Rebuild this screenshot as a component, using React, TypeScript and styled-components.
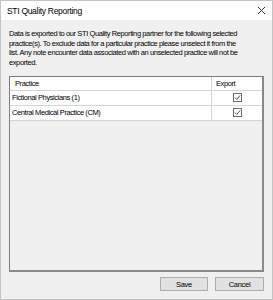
import styled, { createGlobalStyle } from 'styled-components';

const GlobalStyle = createGlobalStyle`
  html, body {
    margin: 0;
    padding: 0;
    background: #ffffff;
  }
  body {
    font-family: 'Liberation Sans', Arial, sans-serif;
    color: #000;
  }
`;

const StyledWindow = styled.div`
  width: 273px;
  height: 300px;
  box-sizing: border-box;
  border: 1px solid #c4c4c4;
  display: flex;
  flex-direction: column;
  background: #f0f0f0;
  overflow: hidden;
`;

const StyledTitleBar = styled.div`
  height: 19px;
  flex: none;
  background: #ffffff;
  display: flex;
  align-items: center;
  justify-content: space-between;
  padding: 0 6px 0 6px;
`;

const StyledTitle = styled.span`
  font-size: 8.5px;
  letter-spacing: -0.3px;
`;

const StyledBody = styled.div`
  flex: 1;
  display: flex;
  flex-direction: column;
  padding: 9px 8px 8px 8px;
  min-height: 0;
`;

const StyledDescription = styled.p`
  margin: 0 0 8px 0;
  width: 236px;
  font-size: 7.5px;
  line-height: 9.7px;
  letter-spacing: -0.4px;
`;

const StyledGrid = styled.div`
  flex: 1;
  border: 1px solid #7d7d7d;
  border-right-width: 2px;
  border-bottom-width: 2px;
  border-right-color: #8a8a8a;
  border-bottom-color: #8a8a8a;
  background: #f0f0f0;
  display: flex;
  flex-direction: column;
`;

const StyledRow = styled.div<{ $header?: boolean }>`
  display: grid;
  grid-template-columns: 202px 1fr;
  height: ${(p) => (p.$header ? '13px' : '14px')};
  background: #ffffff;
  border-bottom: 1px solid #d5d5d5;
  font-size: 7.5px;
  letter-spacing: -0.4px;
`;

const StyledCell = styled.div<{ $indent?: number; $center?: boolean }>`
  display: flex;
  align-items: center;
  justify-content: ${(p) => (p.$center ? 'center' : 'flex-start')};
  padding-left: ${(p) => p.$indent ?? 2}px;
  border-right: 1px solid #d5d5d5;
  white-space: nowrap;
  &:last-child {
    border-right: none;
  }
`;

const StyledButtons = styled.div`
  display: flex;
  justify-content: flex-end;
  gap: 7px;
  margin-top: 5px;
`;

const StyledButton = styled.button<{ $width: number }>`
  width: ${(p) => p.$width}px;
  height: 14px;
  padding: 0;
  background: #e1e1e1;
  border: 1px solid #adadad;
  font-family: 'Liberation Sans', Arial, sans-serif;
  font-size: 7.5px;
  letter-spacing: -0.3px;
  color: #000;
`;

const CloseIcon = () => (
  <svg width="9" height="9" viewBox="0 0 9 9">
    <path d="M1 1 L8 8 M8 1 L1 8" stroke="#222" strokeWidth="0.9" fill="none" />
  </svg>
);

const CheckBox = () => (
  <svg width="9" height="9" viewBox="0 0 9 9">
    <rect x="0.5" y="0.5" width="8" height="8" fill="#fff" stroke="#6d6d6d" />
    <path d="M2 4.6 L3.8 6.4 L7.1 2.4" stroke="#333" strokeWidth="0.9" fill="none" />
  </svg>
);

const practices = ['Fictional Physicians (1)', 'Central Medical Practice (CM)'];

const App = () => {
  return (
    <StyledWindow>
      <GlobalStyle />
      <StyledTitleBar>
        <StyledTitle>STI Quality Reporting</StyledTitle>
        <CloseIcon />
      </StyledTitleBar>
      <StyledBody>
        <StyledDescription>
          Data is exported to our STI Quality Reporting partner for the following selected practice(s). To
          exclude data for a particular practice please unselect it from the list. Any note encounter data
          associated with an unselected practice will not be exported.
        </StyledDescription>
        <StyledGrid>
          <StyledRow $header>
            <StyledCell $indent={5}>Practice</StyledCell>
            <StyledCell $indent={4}>Export</StyledCell>
          </StyledRow>
          {practices.map((name) => (
            <StyledRow key={name}>
              <StyledCell>{name}</StyledCell>
              <StyledCell $center $indent={0}>
                <CheckBox />
              </StyledCell>
            </StyledRow>
          ))}
        </StyledGrid>
        <StyledButtons>
          <StyledButton $width={48}>Save</StyledButton>
          <StyledButton $width={49}>Cancel</StyledButton>
        </StyledButtons>
      </StyledBody>
    </StyledWindow>
  );
};

export default App;
